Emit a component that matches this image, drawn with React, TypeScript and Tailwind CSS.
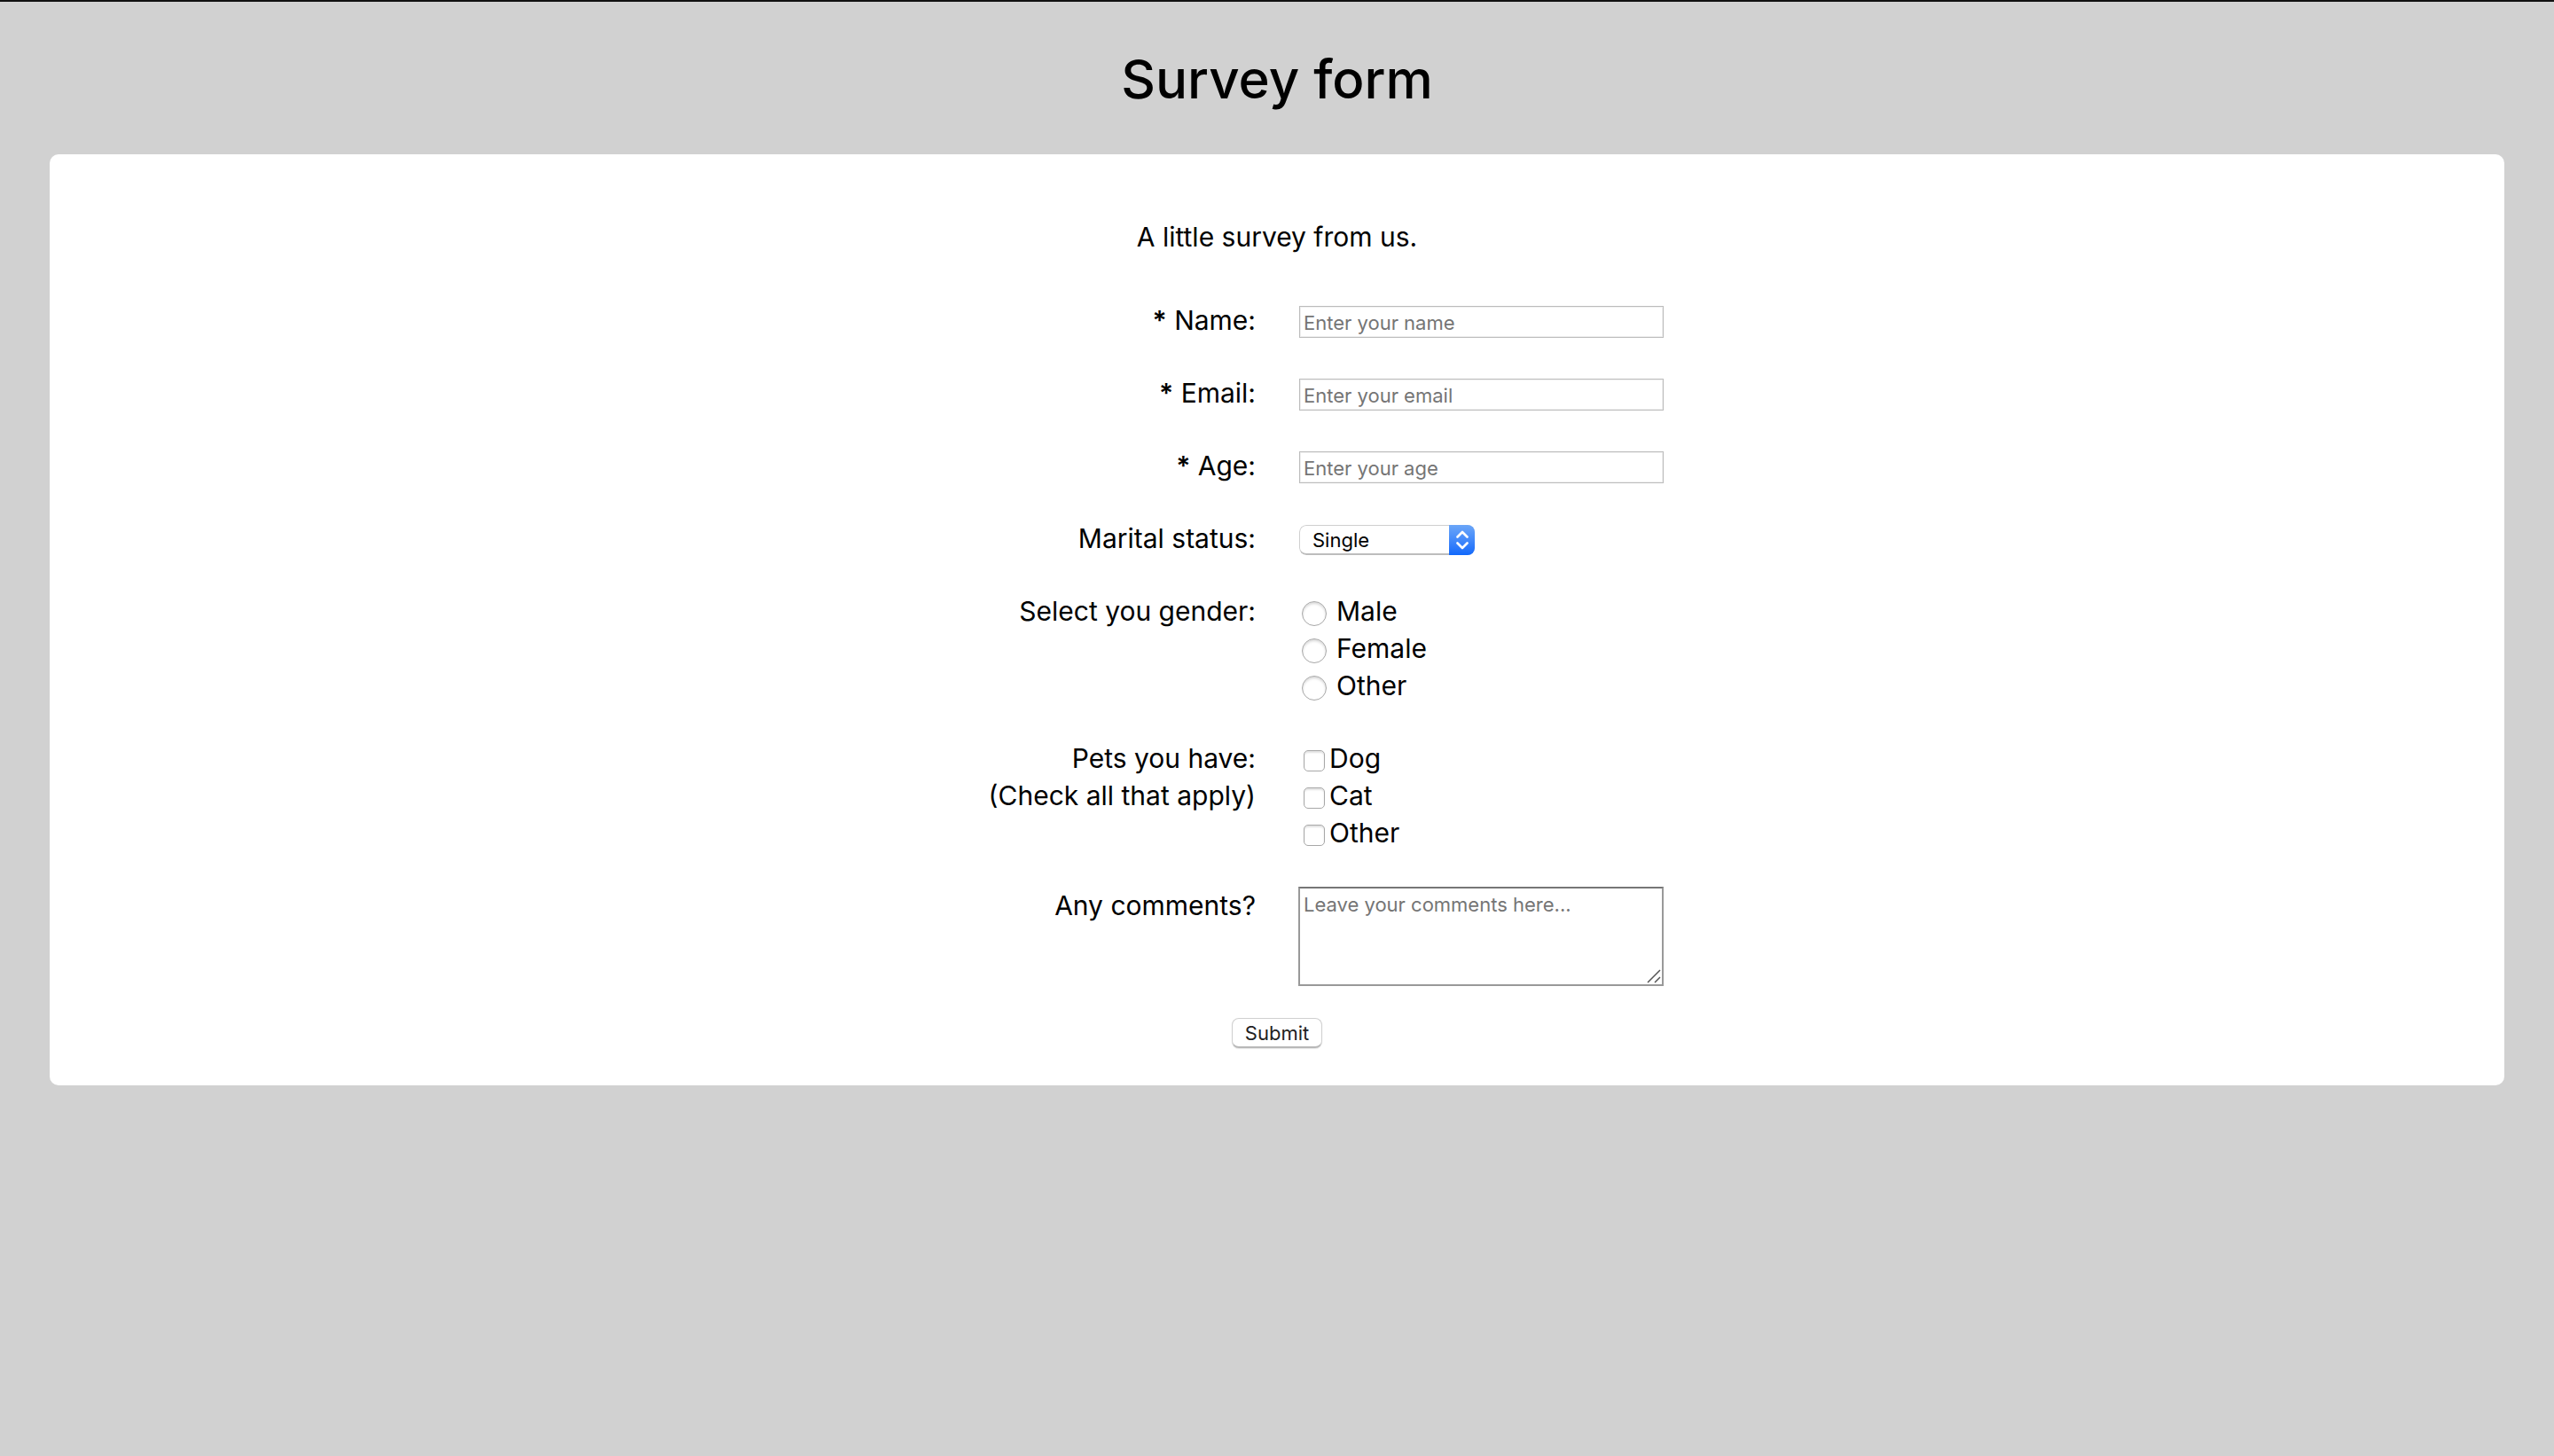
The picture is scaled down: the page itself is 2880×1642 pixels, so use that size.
import type { ReactNode } from "react";

const textFields = [
  { id: "name", label: "Name:", type: "text", placeholder: "Enter your name" },
  { id: "email", label: "Email:", type: "email", placeholder: "Enter your email" },
  { id: "age", label: "Age:", type: "text", placeholder: "Enter your age" },
];

const genders = ["Male", "Female", "Other"];
const pets = ["Dog", "Cat", "Other"];

function Row({ label, children }: { label: ReactNode; children: ReactNode }) {
  return (
    <div className="grid grid-cols-2 items-start gap-x-12">
      <div className="text-right">{label}</div>
      <div>{children}</div>
    </div>
  );
}

function MaritalStatus() {
  return (
    <div className="relative mt-1.5 ml-px h-[34px] w-[198px] overflow-hidden rounded-lg">
      <select
        id="status"
        className="block h-full w-full appearance-none rounded-lg border border-b-2 border-[#cfcfcf] border-b-[#bdbdbd] bg-white pl-[14px] font-[Inter,sans-serif] text-[22px] leading-[30px] text-black"
      >
        <option>Single</option>
        <option>Married</option>
        <option>Divorced</option>
      </select>
      <span className="pointer-events-none absolute inset-y-0 right-0 flex w-[29px] items-center justify-center bg-linear-to-b from-[#6ba6f8] to-[#0f68fb]">
        <svg width="14" height="22" viewBox="0 0 14 22" fill="none" stroke="white" strokeWidth="2.6" strokeLinecap="round" strokeLinejoin="round">
          <path d="M1.5 7.5 7 2l5.5 5.5M1.5 14.5 7 20l5.5-5.5" />
        </svg>
      </span>
    </div>
  );
}

export default function App() {
  return (
    <div className="min-h-screen border-t-2 border-[#111] bg-[#d1d1d1] px-14 pt-[47px] font-[Inter,sans-serif] text-[30px] leading-[42px] text-black">
      <h1 className="text-center text-[60px] leading-[80px] font-medium">Survey form</h1>

      <form className="mt-[45px] rounded-[10px] bg-white pt-[72px] pb-[42px]">
        <p className="mb-[52px] text-center">A little survey from us.</p>

        <div className="flex flex-col gap-10">
          {textFields.map((f) => (
            <Row
              key={f.id}
              label={
                <label htmlFor={f.id}>
                  <span className="font-semibold">*</span> {f.label}
                </label>
              }
            >
              <input
                id={f.id}
                type={f.type}
                placeholder={f.placeholder}
                className="mt-[5px] ml-px block h-9 w-[411px] border border-[#bcbcbc] bg-white px-1 pt-[2px] text-[22px] leading-[30px] shadow-[inset_0_0_0_1px_#f0f0f0] placeholder:text-[#757575]"
              />
            </Row>
          ))}

          <Row label={<label htmlFor="status">Marital status:</label>}>
            <MaritalStatus />
          </Row>

          <Row label="Select you gender:">
            {genders.map((g) => (
              <label key={g} className="flex items-center gap-[11px] pl-1">
                <input
                  type="radio"
                  name="gender"
                  className="mt-[5px] size-7 appearance-none rounded-full border border-[#a8a8a8] bg-white shadow-[inset_0_2px_3px_#d8d8d8] checked:border-8 checked:border-[#0f68fb]"
                />
                {g}
              </label>
            ))}
          </Row>

          <Row
            label={
              <>
                Pets you have:
                <br />
                (Check all that apply)
              </>
            }
          >
            {pets.map((p) => (
              <label key={p} className="flex items-center gap-[5px] pl-1.5">
                <input
                  type="checkbox"
                  name="pets"
                  className="mt-[5px] size-6 appearance-none rounded-[5px] border border-[#a8a8a8] bg-white shadow-[inset_0_2px_2px_#e2e2e2] checked:bg-[#0f68fb]"
                />
                {p}
              </label>
            ))}
          </Row>

          <Row label={<label htmlFor="comments">Any comments?</label>}>
            <div className="relative w-[412px]">
              <textarea
                id="comments"
                placeholder="Leave your comments here..."
                className="block h-28 w-full resize-none border-2 border-[#999] border-t-[#767676] bg-white px-1 pt-[3px] text-[22px] leading-[30px] placeholder:text-[#757575]"
              />
              <svg className="pointer-events-none absolute right-[3px] bottom-[3px]" width="16" height="16" viewBox="0 0 16 16" fill="none" stroke="#555" strokeWidth="1.5">
                <path d="M1 15 15 1M9 15l6-6" />
              </svg>
            </div>
          </Row>
        </div>

        <div className="mt-9 flex justify-center">
          <button
            type="submit"
            className="h-[34px] rounded-lg border border-b-2 border-[#d0d0d0] border-b-[#b8b8b8] bg-white px-[14px] pt-px text-[22px] leading-[30px] text-[#222] shadow-[0_1px_1px_#e6e6e6]"
          >
            Submit
          </button>
        </div>
      </form>
    </div>
  );
}
